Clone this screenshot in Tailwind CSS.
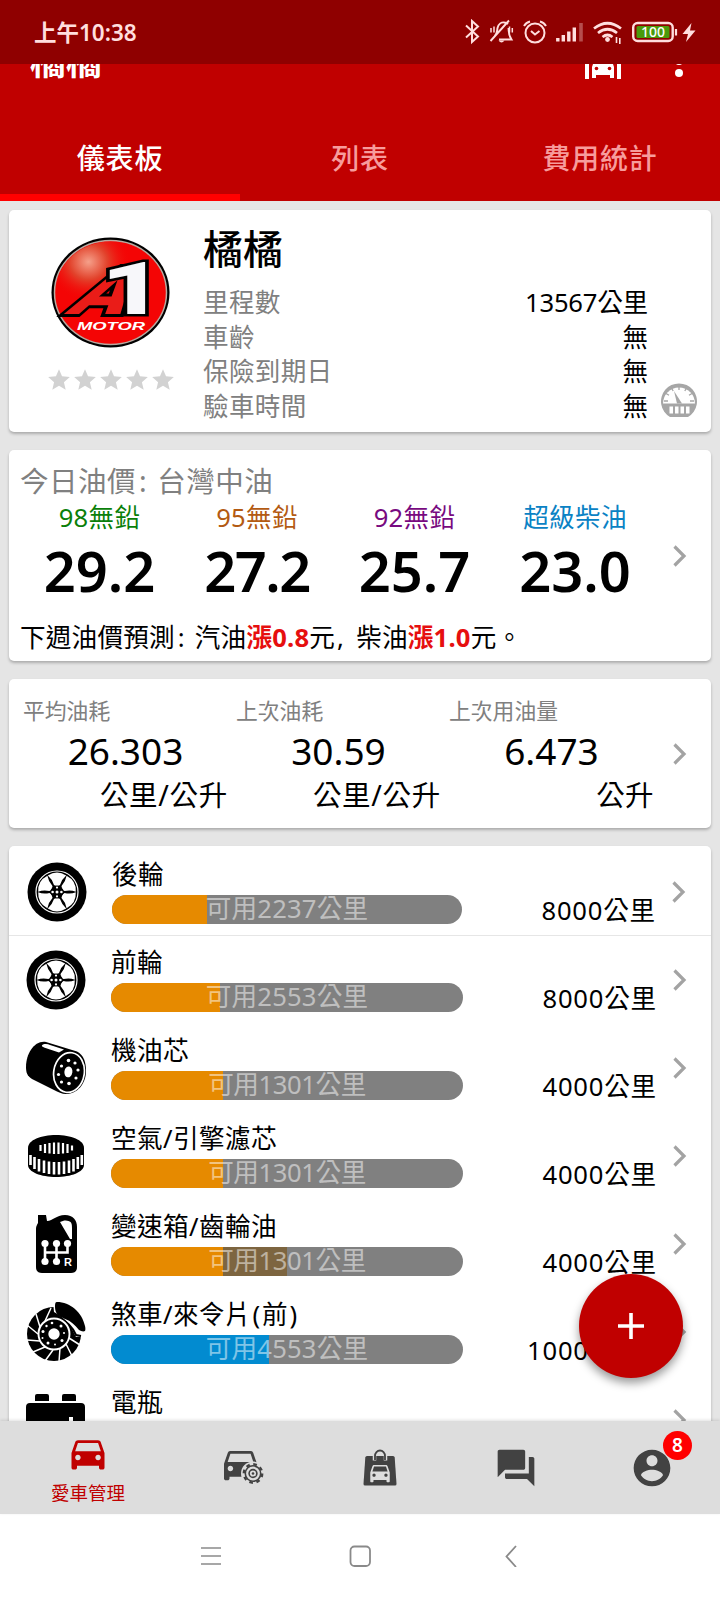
<!DOCTYPE html>
<html lang="zh-Hant">
<head>
    <meta charset="UTF-8">
    <meta name="viewport" content="width=device-width, initial-scale=1.0">
    <title>愛車管理</title>
    <script src="https://cdn.jsdelivr.net/npm/@tailwindcss/browser@4"></script>
</head>
<body class="bg-white font-['Noto_Sans','Noto_Sans_CJK_TC',sans-serif] text-black">

<!-- icons -->
<svg class="hidden">
    <symbol id="chevron" viewBox="0 0 14 22"><path d="M1.5 1.5 11 11 1.5 20.5" fill="none" stroke="#a3a3a3" stroke-width="3.2"/></symbol>
    <symbol id="star" viewBox="0 0 24 24"><path d="M12 17.27 18.18 21l-1.64-7.03L22 9.24l-7.19-.61L12 2 9.19 8.63 2 9.24l5.46 4.73L5.82 21z" fill="#d2d2d2"/></symbol>
    <symbol id="window" viewBox="0 0 60 60"><path d="M20.8 13.6Q30 7.6 39.2 13.6Q35 17 33 23Q30 25 27 23Q25 17 20.8 13.6Z" fill="#fff"/></symbol>
    <symbol id="wheel" viewBox="0 0 60 60">
        <circle cx="30" cy="30" r="29.5"/>
        <circle cx="30" cy="30" r="21" fill="none" stroke="#fff" stroke-width="1.2"/>
        <use href="#window"/>
        <use href="#window" transform="rotate(60 30 30)"/>
        <use href="#window" transform="rotate(120 30 30)"/>
        <use href="#window" transform="rotate(180 30 30)"/>
        <use href="#window" transform="rotate(240 30 30)"/>
        <use href="#window" transform="rotate(300 30 30)"/>
        <circle cx="30" cy="30" r="6.5"/>
        <g fill="#fff">
            <circle cx="30" cy="30" r="1.5"/><circle cx="25.6" cy="30" r="1.3"/><circle cx="34.4" cy="30" r="1.3"/>
            <circle cx="30" cy="25.6" r="1.1"/><circle cx="30" cy="34.4" r="1.1"/>
        </g>
    </symbol>
    <symbol id="oil" viewBox="0 0 60 60">
        <path d="M20 4 51 13.5C58 17 60 25 60 33c0 13-9 23-20 23-4 0-8-2-12-4L6 41C1 38 0 34 0 29 0 15 9 2 20 4z"/>
        <path d="M17 6.5c3-1 5-.3 7 .4l14 4.5-5 3-15-5c-2-.8-3-1.8-1-2.9z" fill="#fff"/>
        <ellipse cx="43" cy="34.5" rx="15.3" ry="20" fill="none" stroke="#fff" stroke-width="1.7" transform="rotate(9 43 34.5)"/>
        <ellipse cx="42.3" cy="34" rx="4" ry="5.5" fill="#fff" transform="rotate(9 43 34.5)"/>
        <g fill="#fff"><circle cx="42.5" cy="22.5" r="1.8"/><circle cx="49" cy="25" r="1.6"/><circle cx="52" cy="32" r="1.6"/><circle cx="50" cy="40" r="1.6"/><circle cx="43" cy="45.5" r="1.8"/><circle cx="35.5" cy="44" r="1.6"/><circle cx="32.5" cy="36.5" r="1.6"/><circle cx="35.5" cy="28" r="1.6"/></g>
    </symbol>
    <symbol id="air" viewBox="0 0 60 60">
        <path d="M2 22C2 14 15 9 30 9s28 5 28 13v17c0 7-13 12-28 12S2 46 2 39z"/>
        <g stroke="#fff" stroke-width="2.6">
            <path d="M4.5 29v10M8.5 31v12M13 33v12.5M18 34.5V47M23 35.5V48M28 36v12.5M33 36v12.5M38 35.5V48M43 34.5V47M47.5 33v12.5M51.8 31v12M55.8 29v10"/>
            <path d="M14.5 19v6M19 18v9M23.5 17v10.5M28 16.5V28M32.5 16.5V28M37 17v10.5M41.5 18v9M46 19.5v5" stroke-width="2.2"/>
        </g>
    </symbol>
    <symbol id="gear-oil" viewBox="0 0 60 60">
        <path d="M12 1h8l1 6c6 0 9-6 18-6 8 0 12 5 12 12v40c0 4-2 6-6 6H16c-4 0-6-2-6-6V15c0-3 1-4 2-6z"/>
        <path d="M34 8c3-1.5 6-2 8.5-1C46 8 46 11 46 14v11h-2z" fill="#fff"/>
        <path d="M19 30v17M30.5 30v17M41.5 30v8.5H19" fill="none" stroke="#fff" stroke-width="2.6"/>
        <g fill="#fff"><circle cx="19" cy="29.5" r="3.6"/><circle cx="30.5" cy="29.5" r="3.6"/><circle cx="41.5" cy="29.5" r="3.6"/><circle cx="19" cy="47.5" r="3.6"/><circle cx="30.5" cy="47.5" r="3.6"/></g>
        <text x="38" y="51.5" font-size="11" font-weight="700" fill="#fff" font-family="Liberation Sans">R</text>
    </symbol>
    <symbol id="brake" viewBox="0 0 60 60">
        <circle cx="28" cy="32" r="27"/>
        <path d="M27 0h6c14 3 24 13 27 27v7l-10 1C44 22 38 15 28 10z" fill="#fff"/>
        <path d="M31 0c13 0 25 10 28 24 .5 2 .5 4 0 5-2 1-4 0-6-1-4-5-8-9-14-11-7-3-10-6-10-12 0-3 0-5 2-5z"/>
        <path d="M32 15c8 4 15 11 18 18l5 1" fill="none" stroke="#000" stroke-width="2"/>
        <path d="M19 19 25 6M14 25 10 12M12 32 1 23M14 39 1 38M19 45 7 50M27 48 19 59M34 46 33 60M40 42 46 54M43 36 54 43" fill="none" stroke="#fff" stroke-width="1.5"/>
        <circle cx="28" cy="32" r="15.5" stroke="#fff" stroke-width="1.9"/>
        <circle cx="28" cy="32" r="5.7" fill="#fff"/>
        <g fill="#fff"><circle cx="26" cy="21" r="1.3"/><circle cx="35" cy="24" r="1.5"/><circle cx="38" cy="31" r="1"/><circle cx="36" cy="38.5" r="1.5"/><circle cx="29" cy="42.5" r="1"/><circle cx="22" cy="41" r="1.5"/><circle cx="16.5" cy="36" r="1"/><circle cx="17" cy="29.5" r="1.5"/><circle cx="20.5" cy="24" r="1.2"/></g>
    </symbol>
    <symbol id="battery" viewBox="0 0 60 60">
        <path d="M11 4h10q2 0 2 2v5H9V6q0-2 2-2zM38 4h10q2 0 2 2v5H36V6q0-2 2-2zM4 13h51q4 0 4 4v41H0V17q0-4 4-4z"/>
        <path d="M43 27h4v6h6v4h-6v6h-4v-6h-6v-4h6zM8 33h14v4H8z" fill="#fff"/>
    </symbol>
    <symbol id="car" viewBox="0 0 24 24"><path d="M18.92 6.01C18.72 5.42 18.16 5 17.5 5h-11c-.66 0-1.21.42-1.42 1.01L3 12v8c0 .55.45 1 1 1h1c.55 0 1-.45 1-1v-1h12v1c0 .55.45 1 1 1h1c.55 0 1-.45 1-1v-8l-2.08-5.99zM6.5 16c-.83 0-1.5-.67-1.5-1.5S5.67 13 6.5 13s1.5.67 1.5 1.5S7.33 16 6.5 16zm11 0c-.83 0-1.5-.67-1.5-1.5s.67-1.5 1.5-1.5 1.5.67 1.5 1.5-.67 1.5-1.5 1.5zM5 11l1.5-4.5h11L19 11H5z" fill="currentColor"/></symbol>
</svg>

<div class="w-[720px] h-[1600px] flex flex-col overflow-hidden">

    <!-- status bar -->
    <div class="h-16 shrink-0 bg-[#8f0000] flex items-center justify-between pl-[34px] pr-[24px] text-[#ffdede]">
        <span class="text-[22.5px] font-semibold leading-8 pt-[2px]">上午10:38</span>
        <svg class="w-[232px] h-[26px]" viewBox="464 19 232 26" fill="none" stroke="currentColor" stroke-width="2">
            <path d="m466 25.5 12 11-6 5.500V21l6 5.500-12 11"/>
            <path d="M494.500 36.500c3-3 2.500-6 3-8.500 1-4 4-6 7-5.500 1.500.2 2.500.7 3.500 1.500M508.500 28c.5 4-.5 6 3 11.500H499M490.500 41 509 20.500" stroke-width="1.9"/>
            <path d="M491 28v4.500M494 26.500v6M509.500 26.500v6M512.300 28v4.500" stroke-width="1.500"/>
            <path d="M498.500 40.500h6q-3 4-6 0z" fill="currentColor" stroke="none"/>
            <circle cx="535" cy="33" r="9.500"/>
            <path d="m531 31 4 3.500 4.500-3.500M524 26q2-3.500 6-4.500M546 26q-2-3.500-6-4.500"/>
            <path d="M557.800 38v3.500M563.300 35v6.500M568.800 31.500v10M574.300 27.500v14" stroke-width="3.400"/>
            <path d="M581 23v18.500" stroke-width="3.600" opacity=".35"/>
            <path d="M594 28.500q13.500-10.500 27 0M598 33q9.500-7.500 19 0M602.500 37q5-4 10 0" stroke-width="2.700"/>
            <circle cx="607.500" cy="39.500" r="2.400" fill="currentColor" stroke="none"/>
            <path d="M616.500 37v6M619.800 38v6" stroke-width="1.600"/>
            <rect x="633.200" y="23" width="39.500" height="18" rx="4.500" stroke-width="2.400"/>
            <rect x="636.500" y="26" width="33" height="12" rx="1.500" fill="#4a9a0c" stroke="none"/>
            <path d="M676 29v6.500" stroke-width="2.200"/>
            <text x="653" y="37.200" text-anchor="middle" font-size="14" font-weight="500" fill="#fff" stroke="none">100</text>
            <path d="m691.500 23-9 11h5.500l-2 8 9.500-11.500H690z" fill="currentColor" stroke="none"/>
        </svg>
    </div>

    <!-- toolbar, scrolled under the status bar -->
    <div class="h-[56px] shrink-0 bg-[#c00000] text-white overflow-hidden flex items-start justify-between pl-[30px] pr-[37px]">
        <span class="-mt-[24px] text-[36px] font-bold leading-[44px]">橘橘</span>
        <div class="flex gap-[54px]">
            <svg class="-mt-[21px] w-[36px] h-[36px]" viewBox="0 0 36 36">
                <path d="M0 36V10L18 0l18 10v26h-4V14H4v22z" fill="#fff"/>
                <path d="M7 35V24l3-9h16l3 9v11h-4v-3H11v3z" fill="#fff"/>
                <circle cx="11.5" cy="25.5" r="1.8" fill="#c00000"/><circle cx="24.5" cy="25.5" r="1.8" fill="#c00000"/>
            </svg>
            <svg class="-mt-[19px] w-[8px] h-[32px]" viewBox="0 0 8 32" fill="#fff"><circle cx="4" cy="4" r="4"/><circle cx="4" cy="16" r="4"/><circle cx="4" cy="28" r="4"/></svg>
        </div>
    </div>

    <!-- tabs -->
    <div class="h-[81px] shrink-0 bg-[#c00000] grid grid-cols-3 text-center text-[28px] tracking-[0.8px] font-medium leading-[76px]">
        <div class="text-white h-[81px] border-b-[7px] border-[#ff0000]">儀表板</div>
        <div class="text-[#f79c9c]">列表</div>
        <div class="text-[#f79c9c]">費用統計</div>
    </div>

    <main class="flex-1 min-h-0 overflow-hidden bg-[#e5e5e5] px-[9px] pt-[9px] flex flex-col gap-[18px]">

        <!-- vehicle -->
        <section class="h-[222px] shrink-0 bg-white rounded-[5px] shadow-[0_2px_3px_rgba(0,0,0,0.25)] flex">
            <div class="w-[194px] pl-[9px] pt-[27px] flex flex-col items-center">
                <svg class="w-[119px] h-[111px] shrink-0" viewBox="0 0 119 111">
                    <defs>
                        <radialGradient id="shine" cx=".3" cy=".2" r=".38"><stop offset="0" stop-color="#f5a08a"/><stop offset=".45" stop-color="#e2432c"/><stop offset="1" stop-color="#f40505" stop-opacity="0"/></radialGradient>
                    </defs>
                    <ellipse cx="59.5" cy="55.5" rx="59" ry="55"/>
                    <ellipse cx="59.5" cy="55.5" rx="56" ry="52" fill="#f40505" stroke="#b9a9a0" stroke-width="1.5"/>
                    <ellipse cx="59.5" cy="55.5" rx="55" ry="51" fill="url(#shine)"/>
                    <g font-weight="900" paint-order="stroke" stroke="#000">
                        <text transform="translate(13 77) skewX(-37) scale(1.25 1)" font-family="Roboto" font-size="66" fill="#ea1c18" stroke-width="6">A</text>
                        <text transform="translate(50 77) scale(1.5 1)" font-family="Roboto" font-size="72" fill="#f7f7fa" stroke-width="5">1</text>
                    </g>
                    <text x="60" y="93" text-anchor="middle" textLength="68" lengthAdjust="spacingAndGlyphs" font-family="Liberation Sans" font-style="italic" font-weight="700" font-size="11" fill="#fff">MOTOR</text>
                </svg>
                <div class="flex mt-[19px]">
                    <svg class="size-[26px]"><use href="#star"/></svg>
                    <svg class="size-[26px]"><use href="#star"/></svg>
                    <svg class="size-[26px]"><use href="#star"/></svg>
                    <svg class="size-[26px]"><use href="#star"/></svg>
                    <svg class="size-[26px]"><use href="#star"/></svg>
                </div>
            </div>
            <div class="w-[445px] pt-[19px]">
                <h1 class="text-[40px] leading-[40px] font-medium">橘橘</h1>
                <dl class="mt-[17px] text-[25.6px] leading-[34.7px]">
                    <div class="flex justify-between"><dt class="text-[#808080] tracking-[0.3px]">里程數</dt><dd class="tracking-[-0.2px]">13567公里</dd></div>
                    <div class="flex justify-between"><dt class="text-[#808080] tracking-[0.3px]">車齡</dt><dd>無</dd></div>
                    <div class="flex justify-between"><dt class="text-[#808080] tracking-[0.3px]">保險到期日</dt><dd>無</dd></div>
                    <div class="flex justify-between"><dt class="text-[#808080] tracking-[0.3px]">驗車時間</dt><dd>無</dd></div>
                </dl>
            </div>
            <svg class="ml-[12px] mb-[14px] self-end w-[38px] h-[36px]" viewBox="0 0 38 36">
                <path d="M10 35A18 18 0 1 1 28 35z" fill="#a6a6a6"/>
                <path d="M3 21.5a16 16 0 1 1 32 0z" fill="#fff"/>
                <path d="M4 19h4M6 11.5l3 1.7M11.5 6l1.700 3M19 4v4M26.500 6l-1.700 3M32 11.500l-3 1.700M34 19h-4" stroke="#a6a6a6" stroke-width="1.300"/>
                <path d="M14 9l8 12.500h-5z" fill="#a6a6a6"/>
                <path d="M9.500 24.500h3.500v7H9.500zM15 24.500h3.500v7H15zM20.500 24.500H24v7h-3.500zM26 24.500h3.500v7H26z" fill="#fff"/>
            </svg>
        </section>

        <!-- fuel price -->
        <section class="h-[211px] shrink-0 bg-white rounded-[5px] shadow-[0_2px_3px_rgba(0,0,0,0.25)] flex items-center">
            <div class="w-[647px] h-full pl-[11px] pt-[13px]">
                <h2 class="text-[28.5px] leading-[36px] tracking-[0.5px] text-[#808080]">今日油價<span class="ml-[3px] mr-[10px]">:</span>台灣中油</h2>
                <div class="grid grid-cols-[159px_156px_159px_162px] text-center text-[25.6px] leading-[38px] tracking-[0.3px]">
                    <div class="text-[#0a7f0a]">98無鉛</div>
                    <div class="text-[#b35a12]">95無鉛</div>
                    <div class="text-[#780a80]">92無鉛</div>
                    <div class="text-[#0a82c4]">超級柴油</div>
                </div>
                <div class="grid grid-cols-[159px_156px_159px_162px] text-center text-[56px] leading-[67px] font-semibold">
                    <div>29.2</div>
                    <div class="tracking-[-1.5px]">27.2</div>
                    <div>25.7</div>
                    <div>23.0</div>
                </div>
                <p class="mt-[15px] text-[25.6px] leading-[34px] tracking-[0.2px] whitespace-nowrap">下週油價預測<span class="ml-[3px] mr-[10px]">:</span>汽油<b class="text-[#e60f0f]">漲0.8</b>元<span class="ml-[2px] mr-[12px]">,</span>柴油<b class="text-[#e60f0f]">漲1.0</b>元<span class="font-['Noto_Sans_CJK_JP']">。</span></p>
            </div>
            <svg class="ml-[17px] w-[14px] h-[22px]"><use href="#chevron"/></svg>
        </section>

        <!-- consumption -->
        <section class="h-[149px] shrink-0 bg-white rounded-[5px] shadow-[0_2px_3px_rgba(0,0,0,0.25)] flex items-center">
            <div class="w-[663px] h-full pl-[10px] pt-[16px] grid grid-cols-[213px_213px_213px]">
                <div><div class="pl-[4px] text-[21.8px] leading-[32px] text-[#808080]">平均油耗</div><div class="text-center text-[37px] leading-[47px]">26.303</div><div class="pr-[4px] pt-px text-right text-[28.5px] leading-[40px] tracking-[0.7px]">公里/公升</div></div>
                <div><div class="pl-[4px] text-[21.8px] leading-[32px] text-[#808080]">上次油耗</div><div class="text-center text-[37px] leading-[47px]">30.59</div><div class="pr-[4px] pt-px text-right text-[28.5px] leading-[40px] tracking-[0.7px]">公里/公升</div></div>
                <div><div class="pl-[4px] text-[21.8px] leading-[32px] text-[#808080]">上次用油量</div><div class="text-center text-[37px] leading-[47px]">6.473</div><div class="pr-[4px] pt-px text-right text-[28.5px] leading-[40px] tracking-[0.4px]">公升</div></div>
            </div>
            <svg class="ml-px w-[14px] h-[22px]"><use href="#chevron"/></svg>
        </section>

        <!-- parts -->
        <section id="parts" class="shrink-0 bg-white rounded-t-[5px] shadow-[0_2px_3px_rgba(0,0,0,0.25)] pt-[2px]"></section>
    </main>

    <!-- bottom navigation -->
    <nav class="relative h-[93px] shrink-0 bg-[#ddd] flex text-[#424242] shadow-[0_-1px_3px_rgba(0,0,0,0.12)]">
        <div class="w-[176px] flex flex-col items-center pt-[10px] text-[#c00000]">
            <svg class="size-[44px]"><use href="#car"/></svg>
            <span class="mt-[4px] text-[18.5px] leading-[28px]">愛車管理</span>
        </div>
        <div class="w-[136px] flex items-center justify-center">
            <svg class="w-[40px] h-[33px]" viewBox="0 0 40 33">
                <svg x="-5.5" y="-9.2" width="44" height="44" viewBox="0 0 24 24"><use href="#car"/></svg>
                <circle cx="29" cy="22.500" r="12" fill="#ddd"/>
                <circle cx="29" cy="22.500" r="9.200" fill="none" stroke="currentColor" stroke-width="2.400" stroke-dasharray="3.600 3.625"/>
                <circle cx="29" cy="22.500" r="7.700" fill="none" stroke="currentColor" stroke-width="1.600"/>
                <circle cx="29" cy="22.500" r="3.900" fill="none" stroke="currentColor" stroke-width="1.600"/>
                <circle cx="29" cy="22.500" r="1.300" fill="currentColor"/>
            </svg>
        </div>
        <div class="w-[136px] flex items-center justify-center">
            <svg class="w-[34px] h-[37px]" viewBox="0 0 34 37">
                <path d="M4 7h26q1.500 0 1.700 1.500L33.500 35q0 1.500-1.500 1.500H2Q.5 36.500.5 35L2.300 8.500Q2.500 7 4 7z" fill="currentColor"/>
                <path d="M11.500 11.500V7a5.500 6 0 0 1 11 0v4.500" fill="none" stroke="#ddd" stroke-width="3.500"/>
                <path d="M12 11V7a5 5.500 0 0 1 10 0v4" fill="none" stroke="currentColor" stroke-width="1.800"/>
                <svg x="4" y="10.500" width="26" height="26" viewBox="0 0 24 24" color="#ddd"><use href="#car"/></svg>
            </svg>
        </div>
        <div class="w-[136px] flex items-center justify-center">
            <svg class="size-[44px]" viewBox="0 0 24 24" fill="currentColor"><path d="M21 6h-2v9H6v2c0 .55.45 1 1 1h11l4 4V7c0-.55-.45-1-1-1zm-4 6V3c0-.55-.45-1-1-1H3c-.55 0-1 .45-1 1v14l4-4h10c.55 0 1-.45 1-1z"/></svg>
        </div>
        <div class="relative w-[136px] flex items-center justify-center">
            <svg class="size-[44px]" viewBox="0 0 24 24" fill="currentColor"><path d="M12 2C6.480 2 2 6.480 2 12s4.480 10 10 10 10-4.480 10-10S17.520 2 12 2zm0 3c1.660 0 3 1.340 3 3s-1.340 3-3 3-3-1.340-3-3 1.340-3 3-3zm0 14.200c-2.500 0-4.710-1.280-6-3.220.03-1.990 4-3.080 6-3.080 1.990 0 5.970 1.090 6 3.080-1.290 1.940-3.500 3.220-6 3.220z"/></svg>
            <span class="absolute left-[79px] top-[10px] size-[29px] rounded-full bg-[#ff0000] text-white text-[19px] font-semibold leading-[29px] text-center">8</span>
        </div>
        <!-- add button -->
        <button class="absolute left-[579px] -top-[147px] size-[104px] rounded-full bg-[#c00000] shadow-[0_5px_10px_rgba(0,0,0,0.4)] flex items-center justify-center">
            <svg class="size-[26px]" viewBox="0 0 26 26"><path d="M13 0v26M0 13h26" stroke="#fff" stroke-width="3.600"/></svg>
        </button>
    </nav>

    <!-- system navigation -->
    <div class="h-[86px] shrink-0 bg-white flex pl-[201px] pt-[31px]">
        <svg class="w-[20px] h-[22px]" viewBox="0 0 20 22"><path d="M0 3h20M0 11h20M0 19h20" stroke="#8a8a8a" stroke-width="1.600"/></svg>
        <svg class="w-[22px] h-[22px] ml-[128px]" viewBox="0 0 22 22"><rect x="1.500" y="1.500" width="19.500" height="19.500" rx="4" fill="none" stroke="#8a8a8a" stroke-width="1.800"/></svg>
        <svg class="w-[12px] h-[22px] ml-[134px]" viewBox="0 0 12 22"><path d="M11 1 1.500 11.500 11 22" fill="none" stroke="#8a8a8a" stroke-width="1.800"/></svg>
    </div>
</div>

<script>
    // fill and second are widths in px of the bar
    const parts = [
        { icon: "wheel", name: "後輪", left: "可用2237公里", total: "8000公里", fill: 95, second: 0, color: "#e68a00" },
        { icon: "wheel", name: "前輪", left: "可用2553公里", total: "8000公里", fill: 109, second: 0, color: "#e68a00" },
        { icon: "oil", name: "機油芯", left: "可用1301公里", total: "4000公里", fill: 112, second: 0, color: "#e68a00" },
        { icon: "air", name: "空氣/引擎濾芯", left: "可用1301公里", total: "4000公里", fill: 112, second: 0, color: "#e68a00" },
        { icon: "gear-oil", name: "變速箱/齒輪油", left: "可用1301公里", total: "4000公里", fill: 112, second: 64, color: "#e68a00" },
        { icon: "brake", name: "煞車/來令片<span class='mx-[1.5px]'>(</span>前<span class='mx-[1.5px]'>)</span>", left: "可用4553公里", total: "10000公里", fill: 158, second: 0, color: "#028bd0" },
        { icon: "battery", name: "電瓶", left: "", total: "", fill: 0, second: 0, color: "#028bd0" }
    ];

    document.getElementById("parts").innerHTML = parts.map((part, i) => `
        <div class="h-[88px] flex ${i === 0 ? "pl-[18px] pr-[25px] border-b border-[#e6e6e6]" : "pl-[17px] pr-[24px]"}">
            <svg class="mt-[14px] size-[60px] shrink-0"><use href="#${part.icon}"/></svg>
            <div class="ml-[25px] shrink-0 ${i === 0 ? "w-[350px]" : "w-[352px]"}">
                <div class="pt-[10px] h-[47px] text-[25.6px] leading-[34px] tracking-[0.4px]">${part.name}</div>
                <div class="relative h-[29px] rounded-full overflow-hidden bg-[#808080] flex">
                    <div style="width:${part.fill}px;background:${part.color}"></div>
                    <div class="bg-[#7d6540]" style="width:${part.second}px"></div>
                    <div class="absolute inset-0 text-center text-[25.6px] leading-[27px] text-white/50 ${part.left.includes("1301") ? "tracking-[-0.4px]" : "tracking-[0.2px]"}">${part.left}</div>
                </div>
            </div>
            <div class="flex-1 pt-[46px] pr-[16px] text-right text-[25.6px] leading-[34px] tracking-[0.8px]">${part.total}</div>
            <svg class="mt-[33px] w-[14px] h-[22px] shrink-0"><use href="#chevron"/></svg>
        </div>`).join("");
</script>
</body>
</html>
